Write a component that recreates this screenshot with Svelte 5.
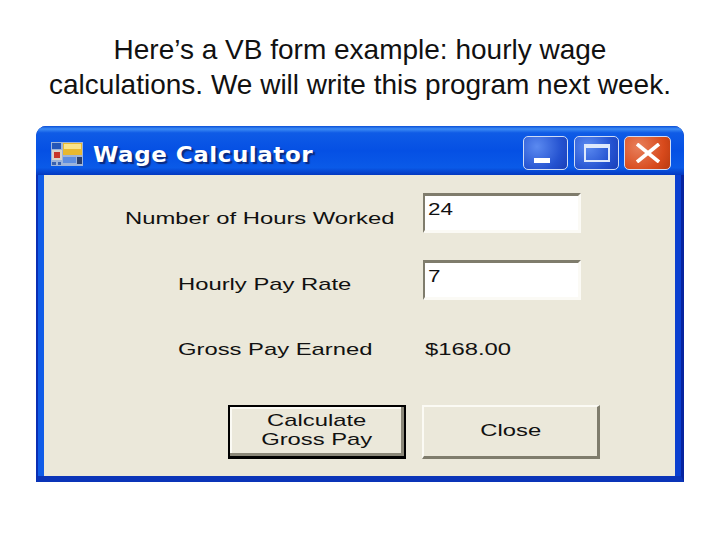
<script>
  const fields = [
    { label: 'Number of Hours Worked', indent: 'wide', value: '24' },
    { label: 'Hourly Pay Rate', indent: 'narrow', value: '7' }
  ];
</script>

<main class="slide">
  <h1>Here’s a VB form example: hourly wage<br />calculations. We will write this program next week.</h1>

  <div class="window">
    <div class="titlebar">
      <svg class="app-icon" width="32" height="24" viewBox="0 0 32 24">
        <rect width="32" height="24" fill="#9db4da" />
        <rect x="1" y="1" width="9" height="6" fill="#2456b8" />
        <rect x="1" y="8" width="10" height="10" fill="#d8d4cc" />
        <rect x="3" y="10" width="6" height="6" fill="#c8352a" />
        <rect x="12" y="1" width="19" height="12" fill="#e8b830" />
        <rect x="13" y="2" width="17" height="5" fill="#f9e38a" />
        <rect x="1" y="20" width="4" height="3" fill="#3a62b0" />
        <rect x="7" y="20" width="3" height="3" fill="#3a62b0" />
        <rect x="12" y="15" width="13" height="6" fill="#5f8ee0" />
        <rect x="26" y="15" width="5" height="7" fill="#2c3f6a" />
      </svg>
      <span class="title">Wage Calculator</span>
      <div class="controls">
        <div class="ctl">
          <span class="min"></span>
        </div>
        <div class="ctl">
          <span class="max"></span>
        </div>
        <div class="ctl close">
          <svg width="26" height="20" viewBox="0 0 26 20">
            <path d="M2 1 L24 19 M24 1 L2 19" stroke="#fff" stroke-width="3.6" fill="none" />
          </svg>
        </div>
      </div>
    </div>

    <div class="body">
      {#each fields as f}
        <div class="row">
          <span class="label {f.indent}"><span class="stretch">{f.label}</span></span>
          <div class="field"><span class="stretch">{f.value}</span></div>
        </div>
      {/each}
      <div class="row">
        <span class="label narrow gross"><span class="stretch">Gross Pay Earned</span></span>
        <span class="result"><span class="stretch">$168.00</span></span>
      </div>

      <div class="buttons">
        <button class="btn default"><span class="stretch">Calculate<br />Gross Pay</span></button>
        <button class="btn"><span class="stretch">Close</span></button>
      </div>
    </div>
  </div>
</main>

<style>
  :global(body) {
    margin: 0;
    background: #fff;
  }

  .slide {
    width: 720px;
    height: 540px;
    overflow: hidden;
    padding-top: 32px;
    box-sizing: border-box;
  }

  h1 {
    margin: 0;
    height: 94px;
    font: 400 28px/35px "Liberation Sans", Arial, sans-serif;
    text-align: center;
    color: #111;
  }

  .window {
    width: 648px;
    height: 356px;
    margin-left: 36px;
    box-sizing: border-box;
    display: flex;
    flex-direction: column;
    background: #0a3fd0;
    border-radius: 10px 10px 0 0;
    border-left: 2px solid #0a2fb4;
    border-right: 3px solid #0624a0;
    border-bottom: 6px solid #0a34b8;
  }

  .titlebar {
    height: 49px;
    flex: none;
    margin: 0 -3px 0 -2px;
    padding: 0 13px 0 15px;
    display: flex;
    align-items: center;
    border-radius: 10px 10px 0 0;
    background: linear-gradient(to bottom, #0a4fd8 0, #3d8cf5 6%, #0f5be6 14%, #0550e4 50%, #0a5ae8 85%, #0438c0 100%);
  }

  .app-icon {
    flex: none;
    margin-top: 6px;
  }

  .title {
    margin: 8px 0 0 10px;
    font: 700 21px/24px "DejaVu Sans", sans-serif;
    letter-spacing: 0.5px;
    color: #fff;
    text-shadow: 2px 2px 1px #0a2a80;
    transform: scaleX(1.095);
    transform-origin: left center;
  }

  .controls {
    margin: 5px 0 0 auto;
    display: flex;
    gap: 6px;
  }

  .ctl {
    width: 45px;
    height: 34px;
    box-sizing: border-box;
    border: 1.5px solid #cfdcf5;
    border-radius: 5px;
    background: radial-gradient(circle at 30% 30%, #5b8af0, #2452d0 65%, #1a3fb8);
    display: flex;
    align-items: center;
    justify-content: center;
    position: relative;
  }

  .close {
    width: 47px;
    margin-left: -1px;
    background: radial-gradient(circle at 30% 30%, #e8805c, #d84a1c 65%, #b83a10);
  }

  .min {
    position: absolute;
    left: 10px;
    bottom: 6px;
    width: 16px;
    height: 5px;
    background: #fff;
  }

  .max {
    width: 26px;
    height: 18px;
    box-sizing: border-box;
    border: 2px solid #dfe9fb;
    border-top-width: 4px;
  }

  .body {
    flex: 1;
    background: #ebe8da;
    border-left: 6px solid #0f5ce8;
    border-right: 6px solid #0a3fd0;
    padding-top: 18px;
    display: flex;
    flex-direction: column;
    gap: 27px;
    font: 400 17px/20px "Liberation Sans", Arial, sans-serif;
    color: #111;
  }

  .row {
    height: 40px;
    display: grid;
    grid-template-columns: 379px 158px;
    align-items: center;
  }

  .label {
    display: block;
    margin-top: 10px;
  }

  .label.wide {
    padding-left: 81px;
    margin-top: 11px;
  }

  .label.narrow {
    padding-left: 134px;
  }

  .label.gross {
    margin-top: 6px;
  }

  .stretch {
    display: inline-block;
    transform: scaleX(1.4);
    transform-origin: left center;
    white-space: nowrap;
  }

  .field {
    height: 40px;
    box-sizing: border-box;
    background: #fff;
    border: 3px solid #fbfaf5;
    border-top: 3px solid #7f7c6c;
    border-left: 2px solid #7f7c6c;
    padding: 5px 0 0 3px;
    font-size: 16px;
    line-height: 18px;
  }

  .result {
    padding-left: 2px;
    margin-top: 6px;
  }

  .buttons {
    display: flex;
    gap: 16px;
    margin: 11px 0 0 184px;
  }

  .btn {
    width: 178px;
    height: 54px;
    padding: 0 0 3px;
    box-sizing: border-box;
    background: #ebe8da;
    border: 2px solid;
    border-color: #fbfaf4 #7f7c6c #7f7c6c #fbfaf4;
    border-bottom-width: 3px;
    border-right-width: 3px;
    font: inherit;
    line-height: 19px;
    color: #111;
    text-align: center;
  }

  .btn .stretch {
    transform-origin: center center;
    text-align: center;
  }

  .btn.default {
    border: 2px solid #000;
    border-bottom-width: 3px;
    box-shadow: inset -3px -3px 0 #8a8778, inset 2px 2px 0 #fbfaf4;
  }
</style>
